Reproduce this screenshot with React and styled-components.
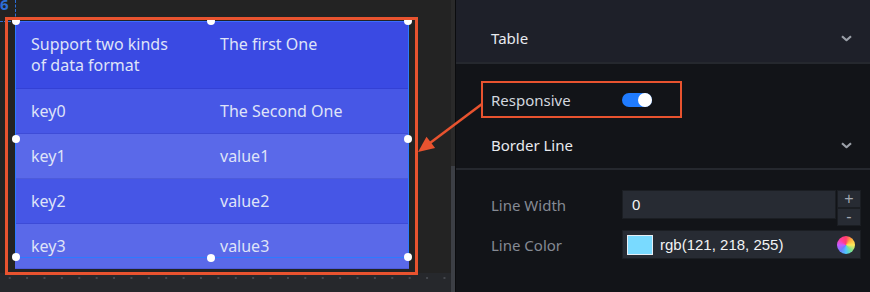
import React from 'react'
import styled, { createGlobalStyle } from 'styled-components'

const GlobalStyle = createGlobalStyle`
  html, body {
    margin: 0;
    padding: 0;
    background: #232323;
  }
  body {
    font-family: 'Noto Sans', 'Open Sans', sans-serif;
  }
`

const ACCENT = '#e8532f'

const Page = styled.div`
  display: flex;
  width: 870px;
  height: 292px;
  overflow: hidden;
  position: relative;
`

// ---------- canvas side ----------

const Canvas = styled.div`
  width: 451px;
  display: flex;
  flex-direction: column;
  background: #232323;
`

const Stage = styled.div`
  position: relative;
  height: 273px;
`

const Ruler = styled.div`
  flex: 1;
  background-color: #26282c;
  background-image: radial-gradient(circle, #45484e 1px, transparent 1.3px);
  background-size: 17.4px 4px;
  background-position: 1px 3px;
  background-repeat: repeat-x;
`

const GuideNumber = styled.span`
  position: absolute;
  left: 0;
  top: -6px;
  font-size: 15px;
  font-weight: 700;
  line-height: 20px;
  color: #2d6ed6;
`

const GuideV = styled.div`
  position: absolute;
  left: 15px;
  top: 0;
  height: 21px;
  border-left: 1px dashed #2d6ed6;
`

const GuideH = styled.div`
  position: absolute;
  left: 0;
  top: 21px;
  width: 15px;
  border-top: 1px dashed #2d6ed6;
`

const Annotation = styled.div`
  position: absolute;
  left: ${p => p.$x}px;
  top: ${p => p.$y}px;
  width: ${p => p.$w}px;
  height: ${p => p.$h}px;
  border: ${p => p.$t}px solid ${ACCENT};
  box-sizing: border-box;
  pointer-events: none;
`

const Widget = styled.div`
  position: absolute;
  left: 15px;
  top: 21px;
  width: 394px;
`

const Table = styled.div`
  display: flex;
  flex-direction: column;
`

const Row = styled.div`
  display: grid;
  grid-template-columns: 189px 1fr;
  align-items: ${p => (p.$head ? 'start' : 'center')};
  padding-top: ${p => (p.$head ? 13 : 0)}px;
  height: ${p => (p.$head ? 68 : 45)}px;
  background: ${p => p.$bg};
  border-bottom: 1px solid rgba(20, 30, 150, 0.18);
  box-sizing: border-box;
`

const Cell = styled.div`
  padding-left: 16px;
  font-size: 16px;
  line-height: 21px;
  color: #dfe3f8;
`

const Selection = styled.div`
  position: absolute;
  left: 0;
  top: 0;
  width: 394px;
  height: 237px;
  border: 1.5px solid #2c7bff;
  border-top-color: #3b6cff;
  box-sizing: border-box;
  pointer-events: none;
`

const Handle = styled.span`
  position: absolute;
  left: ${p => p.$x - 4}px;
  top: ${p => p.$y - 4}px;
  width: 8px;
  height: 8px;
  border-radius: 50%;
  background: #fff;
`

const Scrollbar = styled.div`
  width: 4px;
  background: #2a2a2a;
  display: flex;
  flex-direction: column;
  justify-content: flex-end;
`

const Thumb = styled.div`
  height: 126px;
  background: #3c3f45;
`

// ---------- property panel ----------

const Panel = styled.div`
  flex: 1;
  border-left: 1px solid #0b0c0e;
  background: #121418;
  display: flex;
  flex-direction: column;
`

const SectionHead = styled.div`
  display: flex;
  align-items: center;
  justify-content: space-between;
  height: ${p => p.$h}px;
  padding: ${p => p.$top || 0}px 18px 0 35px;
  background: ${p => p.$bg || 'transparent'};
  border-bottom: 2px solid #25282e;
  box-sizing: border-box;
  font-size: 15px;
  color: #e8eaef;
`

const HighlightRow = styled.div`
  display: flex;
  align-items: center;
  width: 201px;
  height: 37px;
  margin: 17px 0 4px 25px;
  padding-left: 8px;
  border: 2px solid ${ACCENT};
  box-sizing: border-box;
`

const Fields = styled.div`
  display: flex;
  flex-direction: column;
  gap: 11px;
  padding: 20px 9px 0 35px;
`

const Field = styled.div`
  display: flex;
  align-items: center;
  height: 29px;
`

const Label = styled.span`
  width: 131px;
  flex-shrink: 0;
  font-size: 15px;
  color: ${p => (p.$bright ? '#d3d7df' : '#858a94')};
`

const Toggle = styled.span`
  position: relative;
  width: 30px;
  height: 14px;
  border-radius: 7px;
  background: #1f7bff;
`

const Knob = styled.span`
  position: absolute;
  right: 0;
  top: 0;
  width: 14px;
  height: 14px;
  border-radius: 50%;
  background: #fff;
`

const InputBox = styled.div`
  flex: 1;
  display: flex;
  align-items: center;
  height: 100%;
  background: #272b33;
  border: 1px solid #1b1e23;
  box-sizing: border-box;
  padding-left: ${p => p.$pad}px;
  gap: 7px;
  font-family: 'Liberation Sans', Arial, sans-serif;
  font-size: 15px;
  color: #f2f3f5;
`

const Stepper = styled.div`
  width: 24px;
  height: 100%;
  display: flex;
  flex-direction: column;
  margin-left: 1px;
`

const StepButton = styled.div`
  flex: 1;
  display: flex;
  align-items: center;
  justify-content: center;
  background: #272b33;
  border: 1px solid #1b1e23;
  color: #a3a8b2;
  font-family: 'Liberation Sans', Arial, sans-serif;
  font-size: 16px;
  line-height: 1;
`

const Swatch = styled.span`
  width: 26px;
  height: 20px;
  background: rgb(121, 218, 255);
  border: 1px solid #e6eef5;
  box-sizing: border-box;
`

const Wheel = styled.span`
  margin-left: auto;
  margin-right: 5px;
  width: 18px;
  height: 18px;
  border-radius: 50%;
  background: conic-gradient(#ff3d6e, #ffb13d, #ffe95a, #7de38a, #4cc7ff, #6f7dff, #c85aff, #ff3d9a, #ff3d6e);
`

const Chevron = () => (
  <svg width="11" height="7" viewBox="0 0 11 7">
    <path d="M1 1.2 L5.5 5.2 L10 1.2" fill="none" stroke="#9ba0a8" strokeWidth="2.2" strokeLinejoin="round" />
  </svg>
)

const Arrow = styled.svg`
  position: absolute;
  left: 0;
  top: 0;
  pointer-events: none;
`

const rows = [
  { key: 'Support two kinds of data format', value: 'The first One', bg: '#3a4ae3', head: true },
  { key: 'key0', value: 'The Second One', bg: '#4757e6' },
  { key: 'key1', value: 'value1', bg: '#5a69e9' },
  { key: 'key2', value: 'value2', bg: '#4656e6' },
  { key: 'key3', value: 'value3', bg: '#5a69e9' },
]

const handles = [
  [1, 0], [196, 0], [393, 0],
  [1, 118], [393, 118],
  [1, 236], [196, 237], [393, 236],
]

export default function App() {
  return (
    <>
      <GlobalStyle />
      <Page>
        <Canvas>
          <Stage>
            <GuideV />
            <GuideH />
            <GuideNumber>6</GuideNumber>
            <Widget>
              <Table>
                {rows.map(r => (
                  <Row key={r.key} $bg={r.bg} $head={r.head}>
                    <Cell>{r.head ? <>Support two kinds<br />of data format</> : r.key}</Cell>
                    <Cell>{r.value}</Cell>
                  </Row>
                ))}
              </Table>
              <Selection />
              {handles.map(([x, y]) => (
                <Handle key={`${x}-${y}`} $x={x} $y={y} />
              ))}
            </Widget>
            <Annotation $x={5} $y={17} $w={413} $h={258} $t={3} />
          </Stage>
          <Ruler />
        </Canvas>
        <Scrollbar>
          <Thumb />
        </Scrollbar>
        <Panel>
          <SectionHead $h={64} $top={14} $bg="#1e2029">
            <span>Table</span>
            <Chevron />
          </SectionHead>
          <HighlightRow>
            <Label $bright>Responsive</Label>
            <Toggle><Knob /></Toggle>
          </HighlightRow>
          <SectionHead $h={48}>
            <span>Border Line</span>
            <Chevron />
          </SectionHead>
          <Fields>
            <Field>
              <Label>Line Width</Label>
              <InputBox $pad={9}>0</InputBox>
              <Stepper>
                <StepButton>+</StepButton>
                <StepButton>-</StepButton>
              </Stepper>
            </Field>
            <Field>
              <Label>Line Color</Label>
              <InputBox $pad={4}>
                <Swatch />
                rgb(121, 218, 255)
                <Wheel />
              </InputBox>
            </Field>
          </Fields>
        </Panel>
        <Arrow width="870" height="292">
          <line x1="482" y1="104" x2="428" y2="144.5" stroke={ACCENT} strokeWidth="2.5" />
          <polygon points="418,152 426.5,136.7 435.1,147.9" fill={ACCENT} />
        </Arrow>
      </Page>
    </>
  )
}
